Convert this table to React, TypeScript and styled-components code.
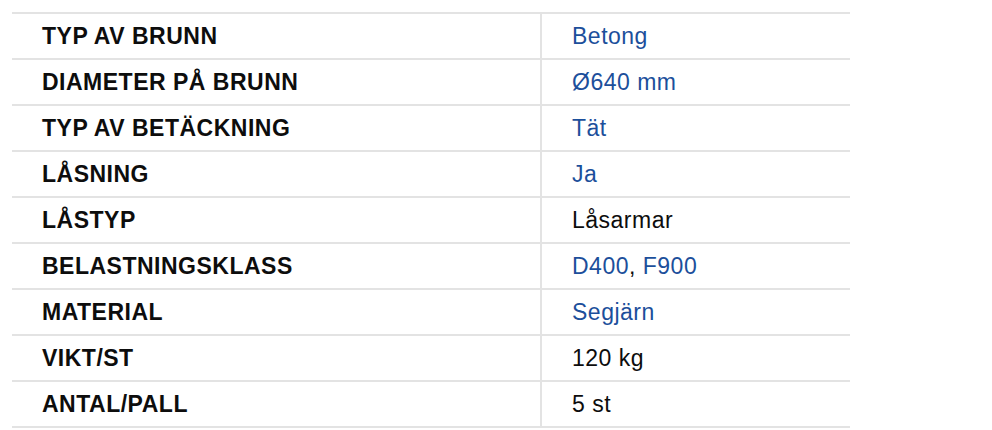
import React from 'react';
import styled, { createGlobalStyle } from 'styled-components';

const GlobalStyle = createGlobalStyle`
  body {
    margin: 0;
    background: #fff;
    font-family: "Liberation Sans", Arial, sans-serif;
  }
`;

const Page = styled.div`
  padding: 12px 0 0 12px;
`;

const Table = styled.div`
  width: 838px;
  border-bottom: 2px solid #e3e3e3;
`;

const Row = styled.div`
  display: grid;
  grid-template-columns: 530px 1fr;
  border-top: 2px solid #e3e3e3;
  height: 44px;
`;

const Label = styled.div`
  display: flex;
  align-items: center;
  padding: 1px 0 0 30px;
  border-right: 2px solid #e3e3e3;
  font-size: 23px;
  letter-spacing: 0.5px;
  font-weight: 700;
  color: #0d0d0d;
`;

const Value = styled.div`
  display: flex;
  align-items: center;
  padding: 1px 0 0 30px;
  font-size: 23px;
  letter-spacing: 0.5px;
  color: #0d0d0d;
  white-space: pre;
`;

const Link = styled.a`
  color: #1c4f9b;
  text-decoration: none;
`;

type Part = { text: string; link?: boolean };

const rows: { label: string; value: Part[] }[] = [
  { label: 'TYP AV BRUNN', value: [{ text: 'Betong', link: true }] },
  { label: 'DIAMETER PÅ BRUNN', value: [{ text: 'Ø640 mm', link: true }] },
  { label: 'TYP AV BETÄCKNING', value: [{ text: 'Tät', link: true }] },
  { label: 'LÅSNING', value: [{ text: 'Ja', link: true }] },
  { label: 'LÅSTYP', value: [{ text: 'Låsarmar' }] },
  {
    label: 'BELASTNINGSKLASS',
    value: [{ text: 'D400', link: true }, { text: ', ' }, { text: 'F900', link: true }],
  },
  { label: 'MATERIAL', value: [{ text: 'Segjärn', link: true }] },
  { label: 'VIKT/ST', value: [{ text: '120 kg' }] },
  { label: 'ANTAL/PALL', value: [{ text: '5 st' }] },
];

export default function App() {
  return (
    <Page>
      <GlobalStyle />
      <Table>
        {rows.map((r) => (
          <Row key={r.label}>
            <Label>{r.label}</Label>
            <Value>
              {r.value.map((p, i) =>
                p.link ? (
                  <Link key={i} href="#">
                    {p.text}
                  </Link>
                ) : (
                  <span key={i}>{p.text}</span>
                )
              )}
            </Value>
          </Row>
        ))}
      </Table>
    </Page>
  );
}
